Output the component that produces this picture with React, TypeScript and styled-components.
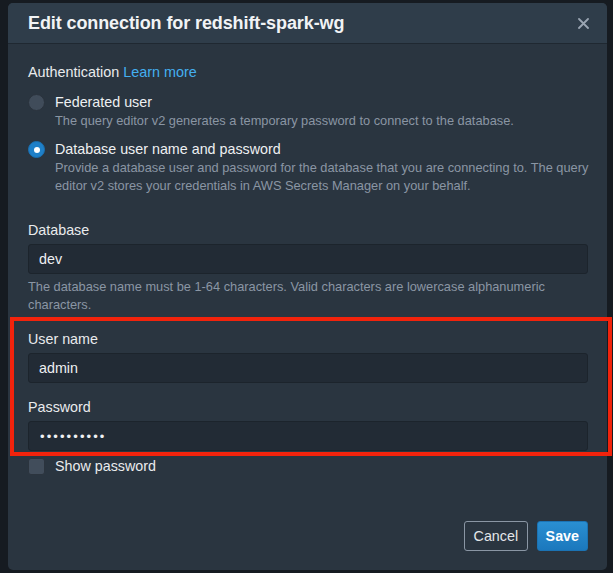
import React from "react";
import styled, { createGlobalStyle } from "styled-components";

const Global = createGlobalStyle`
  html, body { margin: 0; padding: 0; background: #161b21; }
  body { font-family: "Liberation Sans", Arial, sans-serif; -webkit-font-smoothing: antialiased; }
  * { box-sizing: border-box; }
`;

const Page = styled.div`
  width: 613px;
  height: 573px;
  padding: 3px 6px 3px 8px;
  position: relative;
`;

const Dialog = styled.div`
  width: 599px;
  height: 567px;
  background: #2a3540;
  border-radius: 5px;
  overflow: hidden;
  display: flex;
  flex-direction: column;
`;

const Header = styled.div`
  height: 41px;
  background: #2f3d4a;
  border-bottom: 1px solid #1f2831;
  display: flex;
  align-items: center;
  justify-content: space-between;
  padding: 0 16px 0 20px;
  flex-shrink: 0;
`;

const Title = styled.h2`
  margin: 0;
  font-size: 18px;
  font-weight: 700;
  color: #f1f3f5;
  letter-spacing: -0.1px;
`;

const CloseButton = styled.button`
  background: none;
  border: none;
  padding: 0;
  width: 16px;
  height: 16px;
  display: flex;
  align-items: center;
  justify-content: center;
  cursor: pointer;
`;

const Body = styled.div`
  flex: 1;
  padding: 18px 12px 0 20px;
  display: flex;
  flex-direction: column;
`;

const SectionLabel = styled.div`
  font-size: 14.4px;
  line-height: 20px;
  color: #e9ebed;
`;

const Link = styled.a`
  color: #44aff0;
  text-decoration: none;
`;

const RadioGroup = styled.div`
  display: flex;
  flex-direction: column;
  gap: 9px;
  margin-top: 10px;
`;

const OptionRow = styled.label`
  display: grid;
  grid-template-columns: 27px 1fr;
  align-items: start;
`;

const RadioDot = styled.span<{ $checked?: boolean }>`
  width: 17px;
  height: 17px;
  margin-top: 2px;
  border-radius: 50%;
  background: ${(p) => (p.$checked ? "#1f80c8" : "#404c5a")};
  border: 1px solid ${(p) => (p.$checked ? "#1a6fb0" : "#2a333d")};
  display: flex;
  align-items: center;
  justify-content: center;
  &::after {
    content: "";
    width: 6px;
    height: 6px;
    border-radius: 50%;
    background: #ffffff;
    display: ${(p) => (p.$checked ? "block" : "none")};
  }
`;

const OptionText = styled.div`
  display: flex;
  flex-direction: column;
`;

const OptionTitle = styled.span`
  font-size: 14.3px;
  line-height: 20px;
  color: #eef0f2;
`;

const Description = styled.span`
  font-size: 12.8px;
  line-height: 18px;
  color: #8a96a4;
`;

const Field = styled.div<{ $top: number }>`
  display: flex;
  flex-direction: column;
  margin-top: ${(p) => p.$top}px;
`;

const FieldLabel = styled.div`
  font-size: 14.3px;
  line-height: 20px;
  color: #e9ebed;
  margin-bottom: 4px;
`;

const Input = styled.input<{ $masked?: boolean }>`
  width: 560px;
  height: 30px;
  background: #222b35;
  border: 1px solid #1c242c;
  border-radius: 3px;
  padding: 0 ${(p) => (p.$masked ? "11px" : "10px")};
  font-family: "Liberation Sans", Arial, sans-serif;
  font-size: ${(p) => (p.$masked ? "13px" : "14.3px")};
  color: #eef0f2;
  letter-spacing: ${(p) => (p.$masked ? "2.1px" : "0")};
  outline: none;
`;

const Help = styled.div`
  margin-top: 4px;
  font-size: 12.8px;
  line-height: 18px;
  color: #8a96a4;
  padding-right: 20px;
`;

const CheckRow = styled.label`
  display: flex;
  align-items: center;
  gap: 10px;
  margin-top: 5px;
  height: 20px;
`;

const CheckBox = styled.span`
  width: 17px;
  height: 17px;
  border-radius: 3px;
  background: #414d5b;
  border: 1px solid #2b343e;
`;

const CheckText = styled.span`
  font-size: 14.3px;
  color: #e9ebed;
`;

const Footer = styled.div`
  display: flex;
  justify-content: flex-end;
  gap: 9px;
  padding: 45px 7px 0 0;
`;

const Button = styled.button<{ $primary?: boolean }>`
  height: 30px;
  padding: 0 ${(p) => (p.$primary ? "8px" : "8.5px")};
  border-radius: 3px;
  font-family: "Liberation Sans", Arial, sans-serif;
  font-size: 14.3px;
  font-weight: ${(p) => (p.$primary ? 700 : 400)};
  color: ${(p) => (p.$primary ? "#ffffff" : "#e3e6e9")};
  background: ${(p) => (p.$primary ? "linear-gradient(#2a8fd2, #1b78bd)" : "transparent")};
  border: 1px solid ${(p) => (p.$primary ? "#1b73b4" : "#8a96a4")};
  cursor: pointer;
`;

const Highlight = styled.div`
  position: absolute;
  left: 10px;
  top: 317px;
  width: 602px;
  height: 139px;
  border: 4px solid #f2230c;
  pointer-events: none;
`;

export default function App() {
  return (
    <>
      <Global />
      <Page>
        <Dialog>
          <Header>
            <Title>Edit connection for redshift-spark-wg</Title>
            <CloseButton aria-label="Close">
              <svg width="11" height="11" viewBox="0 0 11 11">
                <path d="M1 1L10 10M10 1L1 10" stroke="#9aa5b2" strokeWidth="1.8" strokeLinecap="round" />
              </svg>
            </CloseButton>
          </Header>
          <Body>
            <SectionLabel>
              Authentication <Link href="#">Learn more</Link>
            </SectionLabel>
            <RadioGroup>
              <OptionRow>
                <RadioDot />
                <OptionText>
                  <OptionTitle>Federated user</OptionTitle>
                  <Description>
                    The query editor v2 generates a temporary password to connect to the database.
                  </Description>
                </OptionText>
              </OptionRow>
              <OptionRow>
                <RadioDot $checked />
                <OptionText>
                  <OptionTitle>Database user name and password</OptionTitle>
                  <Description>
                    Provide a database user and password for the database that you are connecting to. The query
                    editor v2 stores your credentials in AWS Secrets Manager on your behalf.
                  </Description>
                </OptionText>
              </OptionRow>
            </RadioGroup>
            <Field $top={25}>
              <FieldLabel>Database</FieldLabel>
              <Input defaultValue="dev" />
              <Help>
                The database name must be 1-64 characters. Valid characters are lowercase alphanumeric characters.
              </Help>
            </Field>
            <Field $top={15}>
              <FieldLabel>User name</FieldLabel>
              <Input defaultValue="admin" />
            </Field>
            <Field $top={14}>
              <FieldLabel>Password</FieldLabel>
              <Input $masked aria-label="Password" readOnly value={"\u2022".repeat(10)} />
            </Field>
            <CheckRow>
              <CheckBox />
              <CheckText>Show password</CheckText>
            </CheckRow>
            <Footer>
              <Button>Cancel</Button>
              <Button $primary>Save</Button>
            </Footer>
          </Body>
        </Dialog>
        <Highlight />
      </Page>
    </>
  );
}
